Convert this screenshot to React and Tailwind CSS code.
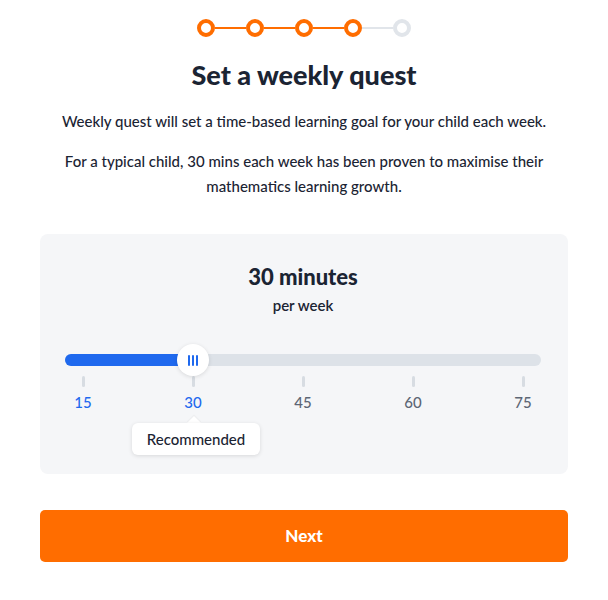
const TICKS = [15, 30, 45, 60, 75]

function Stepper() {
  return (
    <div className="flex items-center">
      {[0, 1, 2, 3, 4].map((i) => (
        <div key={i} className="flex items-center">
          {i > 0 && <div className={`w-[31px] h-[2px] ${i < 4 ? 'bg-[#ff6d00]' : 'bg-[#e1e5ea]'}`} />}
          <div className={`w-[18px] h-[18px] rounded-full border-[4px] bg-white ${i < 4 ? 'border-[#ff6d00]' : 'border-[#e1e5ea]'}`} />
        </div>
      ))}
    </div>
  )
}

export default function App() {
  return (
    <div className="w-[608px] h-[600px] bg-white font-['Lato',sans-serif] text-[#1b2433] flex flex-col items-center pt-[19px]">
      <Stepper />

      <h1 className="mt-[22px] text-[27px] leading-[32px] font-black">Set a weekly quest</h1>

      <p className="mt-[20px] text-[15px] leading-[20px] font-medium">
        Weekly quest will set a time-based learning goal for your child each week.
      </p>
      <p className="mt-[18px] w-[500px] text-center text-[15px] leading-[25px] font-medium">
        For a typical child, 30 mins each week has been proven to maximise their mathematics learning growth.
      </p>

      <div className="mt-[35px] w-[528px] h-[240px] rounded-lg bg-[#f5f6f8] flex flex-col items-center pt-[29px] pl-[25px] pr-[27px]">
        <div className="text-[22px] leading-[28px] font-black">30 minutes</div>
        <div className="mt-[5px] text-[15px] leading-[18px] font-semibold">per week</div>

        <div className="relative mt-[40px] w-full h-[12px] rounded-full bg-[#dde2e8]">
          <div className="h-full w-[128px] rounded-full bg-[#1f69ee]" />
          <div className="absolute left-[112px] top-[-10px] w-[32px] h-[32px] rounded-full bg-white shadow-[0_1px_4px_rgba(0,0,0,0.12)] flex items-center justify-center gap-[2px]">
            <span className="w-[2px] h-[11px] bg-[#1f69ee] rounded-sm" />
            <span className="w-[2px] h-[11px] bg-[#1f69ee] rounded-sm" />
            <span className="w-[2px] h-[11px] bg-[#1f69ee] rounded-sm" />
          </div>
        </div>

        <div className="w-full px-[8px] mt-[10px] flex justify-between">
          {TICKS.map((t) => (
            <div key={t} className="w-[20px] flex flex-col items-center">
              <div className="w-[3px] h-[11px] rounded-sm bg-[#d7dce2]" />
              <div className={`mt-[6px] text-[15px] leading-[18px] font-medium ${t <= 30 ? 'text-[#1f69ee]' : 'text-[#5d6675]'}`}>{t}</div>
            </div>
          ))}
        </div>

        <div className="self-start ml-[67px] mt-[12px] relative">
          <div className="absolute left-[57px] -top-[5px] w-[10px] h-[10px] rotate-45 bg-white shadow-[-1px_-1px_1px_rgba(0,0,0,0.04)]" />
          <div className="relative bg-white rounded-md shadow-[0_1px_4px_rgba(0,0,0,0.12)] w-[128px] h-[32px] flex items-center justify-center text-[15px] font-medium">
            Recommended
          </div>
        </div>
      </div>

      <button className="mt-[36px] w-[528px] h-[52px] rounded-[5px] bg-[#ff6d00] text-white text-[17px] font-black">
        Next
      </button>
    </div>
  )
}
